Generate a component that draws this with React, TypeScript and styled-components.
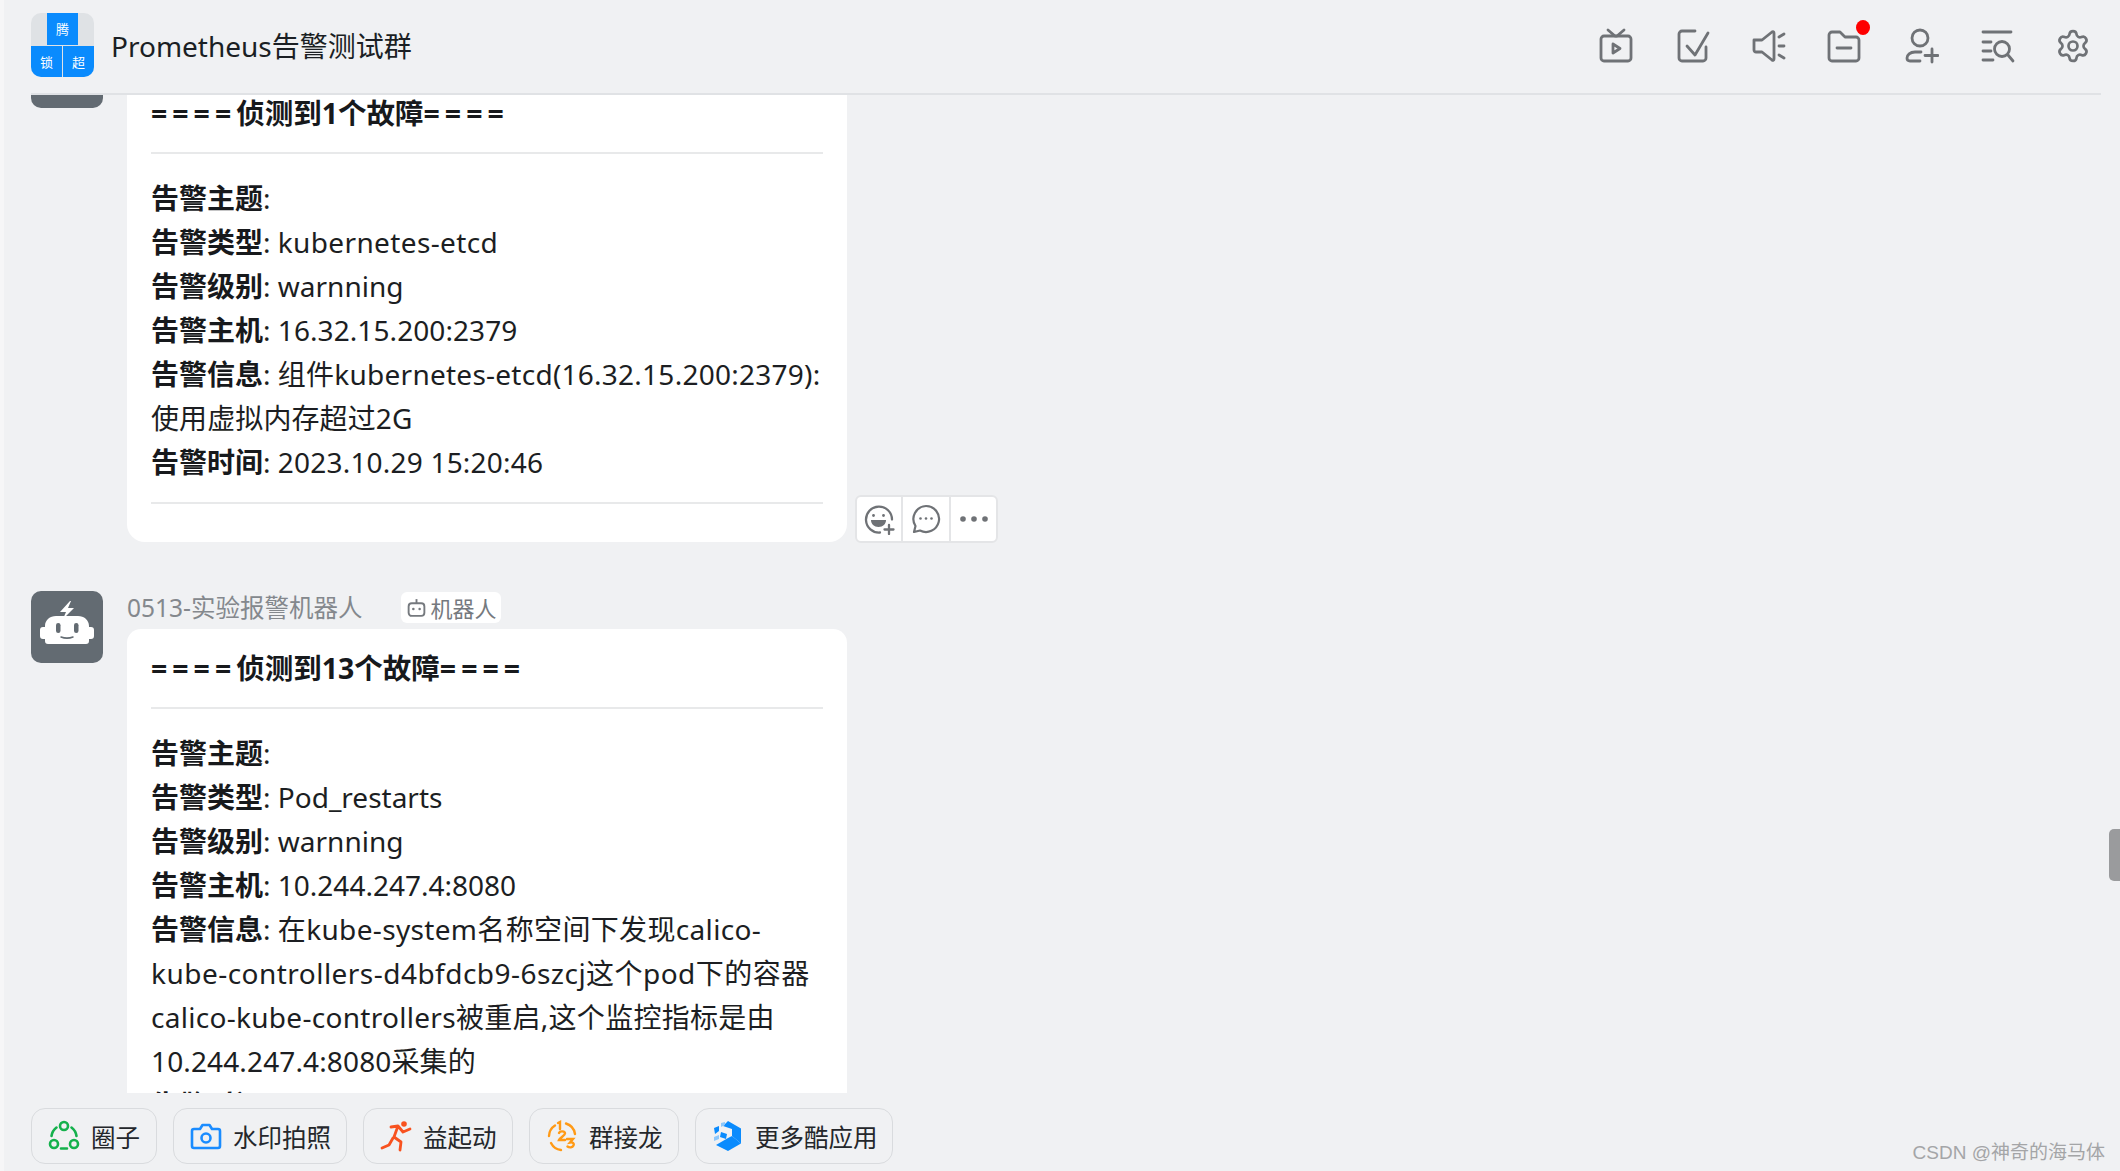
import React from "react";
import styled, { createGlobalStyle } from "styled-components";
import { Settings } from "lucide-react";

const FONT = `"Noto Sans", "Noto Sans CJK SC", sans-serif`;

const Global = createGlobalStyle`
  html, body { margin: 0; padding: 0; height: 100%; overflow: hidden; background: #f0f1f3; }
  #root { height: 100%; }
  * { box-sizing: border-box; }
`;

const Page = styled.div`
  position: relative;
  width: 2120px;
  height: 1171px;
  display: flex;
  flex-direction: column;
  border-left: 4px solid #f6f6f7;
  background: #f0f1f3;
  font-family: ${FONT};
  color: #1f2329;
  overflow: hidden;
`;
const EdgeMark = styled.div`
  position: absolute;
  left: -4px;
  top: 152px;
  width: 2px;
  height: 111px;
  background: #a8a8a8;
`;
const Header = styled.header`
  flex: none;
  height: 95px;
  margin-left: 27px;
  margin-right: 19px;
  border-bottom: 2px solid #e0e2e5;
  display: flex;
  align-items: center;
  position: relative;
  z-index: 2;
  background: #f0f1f3;
`;
const GroupLogo = styled.div`
  width: 63px;
  height: 64px;
  margin-top: -3px;
  border-radius: 10px;
  overflow: hidden;
  background: #dfe2e5;
  display: grid;
  grid-template-columns: 1fr 1fr;
  grid-template-rows: 1fr 1fr;
  gap: 1px;
  position: relative;
  flex: none;
`;
const LogoCell = styled.span<{ $top?: boolean }>`
  background: #0a8bfd;
  color: #fff;
  font-size: 13px;
  display: flex;
  align-items: center;
  justify-content: center;
  ${(p) => p.$top && `grid-column: 1 / 3; width: 31px; justify-self: center;`}
`;
const GroupName = styled.h1`
  margin: -3px 0 0 17px;
  font-size: 28px;
  font-weight: 400;
  color: #1b1f24;
  white-space: nowrap;
`;
const Tools = styled.div`
  margin-left: auto;
  display: flex;
  align-items: center;
  gap: 40px;
  margin-right: 10px;
  margin-top: -2px;
`;
const Tool = styled.span`
  position: relative;
  width: 36px;
  height: 36px;
  color: #6f7276;
  display: block;
  svg { display: block; width: 36px; height: 36px; }
`;
const RedDot = styled.i`
  position: absolute;
  right: -7px;
  top: -8px;
  width: 14px;
  height: 15px;
  border-radius: 50%;
  background: #fe0000;
`;
const Feed = styled.main`
  flex: 1;
  min-height: 0;
  overflow: hidden;
  padding: 0 0 0 27px;
`;
const Message = styled.article<{ $offset?: number }>`
  display: grid;
  grid-template-columns: 72px 720px auto;
  column-gap: 24px;
  align-items: end;
  ${(p) => (p.$offset ? `margin-top: ${p.$offset}px;` : "")}
`;
const Avatar = styled.div<{ $lift?: number }>`
  width: 72px;
  height: 72px;
  margin-top: ${(p) => -(p.$lift ?? 0)}px;
  border-radius: 10px;
  background: #636b72;
  align-self: start;
  grid-row: 1 / 3;
  display: flex;
  align-items: center;
  justify-content: center;
`;
const MetaRow = styled.div`
  grid-column: 2 / 4;
  height: 38px;
  display: flex;
  align-items: flex-start;
  font-size: 24.5px;
  line-height: 34px;
  color: #84888d;
  white-space: nowrap;
`;
const BotTag = styled.span`
  margin-left: 39px;
  margin-top: 1px;
  height: 31px;
  padding: 0 5px;
  border-radius: 6px;
  background: #fff;
  display: flex;
  align-items: center;
  gap: 3px;
  font-size: 22px;
  color: #75797e;
  svg { width: 21px; height: 21px; }
`;
const Bubble = styled.div<{ $clipped?: boolean }>`
  grid-column: 2;
  width: 720px;
  background: #fff;
  border-radius: ${(p) => (p.$clipped ? "14px 14px 0 0" : "0 0 18px 18px")};
  padding: ${(p) => (p.$clipped ? "14px 24px 0" : "0 24px 0")};
  font-size: 28px;
  line-height: 44px;
  color: #1c1e22;
`;
const Title = styled.div`
  font-weight: 700;
  font-size: 28.5px;
  line-height: 50px;
  color: #17191c;
`;
const Eq = styled.span`
  letter-spacing: 5px;
`;
const Rule = styled.hr<{ $after?: boolean; $tight?: boolean }>`
  border: 0;
  height: 2px;
  background: #e8e9ea;
  margin: ${(p) => (p.$after ? "18px 0 38px" : p.$tight ? "14px 0 22px" : "14px 0 23px")};
`;
const Row = styled.p`
  margin: 0;
  white-space: nowrap;
  b { font-weight: 700; color: #17191c; }
`;
const Value = styled.span<{ $track?: number }>`
  letter-spacing: ${(p) => p.$track ?? 0}px;
`;
const Actions = styled.div`
  grid-column: 3;
  margin-left: -16px;
  margin-bottom: -1px;
  display: flex;
  height: 48px;
  border: 2px solid #e4e5e7;
  border-radius: 6px;
  background: #fff;
  width: 143px;
  justify-self: start;
`;
const Action = styled.span<{ $w: number }>`
  width: ${(p) => p.$w}px;
  display: flex;
  align-items: center;
  justify-content: center;
  color: #6f7276;
  & + & { border-left: 2px solid #e4e5e7; }
  svg { width: 32px; height: 32px; display: block; }
`;
const Spacer = styled.div`
  height: 50px;
`;
const Footer = styled.footer`
  flex: none;
  height: 78px;
  padding: 15px 0 0 27px;
  display: flex;
  align-items: flex-start;
  gap: 16px;
`;
const AppBtn = styled.div<{ $w: number }>`
  width: ${(p) => p.$w}px;
  height: 56px;
  border: 1.5px solid #d9dbde;
  border-radius: 14px;
  padding-left: 16px;
  display: flex;
  align-items: center;
  gap: 11px;
  font-size: 24.5px;
  color: #24272b;
  white-space: nowrap;
  svg { width: 32px; height: 32px; flex: none; display: block; }
`;
const Watermark = styled.div`
  position: absolute;
  right: 15px;
  bottom: 5px;
  font-family: "Liberation Sans", "Noto Sans CJK SC", sans-serif;
  font-size: 19px;
  line-height: 26px;
  color: #a4a5a7;
  white-space: nowrap;
`;
const ScrollThumb = styled.div`
  position: absolute;
  right: 0;
  top: 829px;
  width: 11px;
  height: 52px;
  border-radius: 5px 0 0 5px;
  background: #9a9b9d;
`;

const S = { fill: "none", stroke: "currentColor", strokeWidth: 2.8, strokeLinecap: "round" as const, strokeLinejoin: "round" as const };

const TvIcon = () => (
  <svg viewBox="0 0 36 36" {...S}>
    <rect x="2" y="8" width="30" height="25" rx="3" />
    <path d="M9 2l7 6M25 2l-7 6" />
    <path d="M14 16l7 4.5-7 4.5z" />
  </svg>
);
const CheckIcon = () => (
  <svg viewBox="0 0 36 36" {...S}>
    <path d="M20 3H7a3 3 0 0 0-3 3v24a3 3 0 0 0 3 3h21a3 3 0 0 0 3-3V19" />
    <path d="M12 18l8 9L33 5" />
  </svg>
);
const SpeakerIcon = () => (
  <svg viewBox="0 0 36 36" {...S}>
    <path d="M3 12h8L21 4c1-.7 2-.2 2 1v26c0 1.200-1 1.700-2 1l-10-8H5a2 2 0 0 1-2-2z" />
    <path d="M28 9l5-3M28 18h5M28 27l5 3" />
  </svg>
);
const FolderIcon = () => (
  <svg viewBox="0 0 36 36" {...S}>
    <path d="M2 7a3 3 0 0 1 3-3h8l5 5h11a3 3 0 0 1 3 3v18a3 3 0 0 1-3 3H5a3 3 0 0 1-3-3z" />
    <path d="M10 20h14" />
  </svg>
);
const AddUserIcon = () => (
  <svg viewBox="0 0 36 36" {...S}>
    <circle cx="17" cy="10" r="8" />
    <path d="M18 24h-6c-5 0-8 3-8 6 0 2 1 3 3 3h10" />
    <path d="M29 21v13M22 27.500h13" />
  </svg>
);
const SearchListIcon = () => (
  <svg viewBox="0 0 36 36" {...S}>
    <path d="M4 4h28M4 14h8M4 23h8M4 32h10" />
    <circle cx="23" cy="21" r="7.500" />
    <path d="M29 27l5 6" />
  </svg>
);
const RobotFace = () => (
  <svg viewBox="0 0 72 72" width="72" height="72">
    <path d="M39 10L29 21h6l-3 7 11-11h-6l3-7z" fill="#fff" />
    <path d="M25 25h22c6 0 11 4 11 10v1h2a3 3 0 0 1 3 3v6a3 3 0 0 1-3 3h-2v2a3 3 0 0 1-3 3H17a3 3 0 0 1-3-3v-2h-2a3 3 0 0 1-3-3v-6a3 3 0 0 1 3-3h2v-1c0-6 5-10 11-10z" fill="#fff" />
    <rect x="25" y="32" width="4.500" height="10" rx="2.200" fill="#636b72" />
    <rect x="43" y="32" width="4.500" height="10" rx="2.200" fill="#636b72" />
    <path d="M30 46c4 1.500 8 1.500 12 0" stroke="#636b72" strokeWidth="1.500" fill="none" strokeLinecap="round" />
  </svg>
);
const BotGlyph = () => (
  <svg viewBox="0 0 20 20" fill="none" stroke="#75797e" strokeWidth="1.800">
    <rect x="2.500" y="6" width="15" height="12" rx="3" />
    <path d="M10 6V2" />
    <circle cx="7" cy="11.500" r="1.200" fill="#75797e" stroke="none" />
    <circle cx="13" cy="11.500" r="1.200" fill="#75797e" stroke="none" />
  </svg>
);
const EmojiAddIcon = () => (
  <svg viewBox="0 0 32 32" fill="none" stroke="currentColor" strokeWidth="2.300" strokeLinecap="round">
    <path d="M17 29.500A13 13 0 1 1 29 16.500" />
    <circle cx="10.500" cy="12.500" r="1.400" fill="currentColor" stroke="none" />
    <circle cx="20.500" cy="12.500" r="1.400" fill="currentColor" stroke="none" />
    <path d="M8 17h15c0 4-3 7-7.500 7S8 21 8 17z" fill="currentColor" stroke="none" />
    <path d="M26 22v9M21.500 26.500h9" />
  </svg>
);
const CommentIcon = () => (
  <svg viewBox="0 0 32 32" fill="none" stroke="currentColor" strokeWidth="2.200" strokeLinejoin="round">
    <path d="M16 3a13 13 0 1 1-6 24.500L4 29l1.500-6A13 13 0 0 1 16 3z" />
    <circle cx="10.500" cy="15.500" r="1.300" fill="currentColor" stroke="none" />
    <circle cx="16" cy="15.500" r="1.300" fill="currentColor" stroke="none" />
    <circle cx="21.500" cy="15.500" r="1.300" fill="currentColor" stroke="none" />
  </svg>
);
const MoreIcon = () => (
  <svg viewBox="0 0 32 32" fill="currentColor">
    <circle cx="5" cy="16" r="2.800" />
    <circle cx="16" cy="16" r="2.800" />
    <circle cx="27" cy="16" r="2.800" />
  </svg>
);
const CircleAppIcon = () => (
  <svg viewBox="0 0 32 32" fill="none" stroke="#14b14c" strokeWidth="2.600" strokeLinecap="round">
    <circle cx="16" cy="6" r="4" />
    <circle cx="6" cy="24" r="4" />
    <circle cx="26" cy="24" r="4" />
    <path d="M8.500 7.500A13 13 0 0 0 3.500 16M23.500 7.500A13 13 0 0 1 28.500 16M13 28.500h6" />
  </svg>
);
const CameraIcon = () => (
  <svg viewBox="0 0 32 32" fill="none" stroke="#1a8cff" strokeWidth="2.600" strokeLinejoin="round">
    <path d="M4 9h6l2.500-4h7L22 9h6a2 2 0 0 1 2 2v15a2 2 0 0 1-2 2H4a2 2 0 0 1-2-2V11a2 2 0 0 1 2-2z" />
    <circle cx="16" cy="18" r="4.500" />
  </svg>
);
const RunnerIcon = () => (
  <svg viewBox="0 0 32 32" fill="none" stroke="#f8521f" strokeWidth="2.800" strokeLinecap="round" strokeLinejoin="round">
    <circle cx="24" cy="4" r="2.800" fill="#f8521f" stroke="none" />
    <path d="M11 7l7-1 5 6 7-3M18 6l-4 11 7 5-1 8M13 18l-4 7-7 3" />
  </svg>
);
const ChainIcon = () => (
  <svg viewBox="0 0 32 32" fill="none" stroke="#ff9a16" strokeWidth="2.400" strokeLinecap="round">
    <path d="M20 3.500A13 13 0 0 1 29 14M3 16A13 13 0 0 1 9 5.500M5 23a13 13 0 0 0 10 7" />
    <path d="M12 3l2-1v7M13 13c1-2.500 6-2 6 .5 0 2-5 4-6 6.500h6M21 19h6l-3 3.500c3-.5 4.500 1 3.500 3s-4 2.500-6 1" />
  </svg>
);
const CubeIcon = () => (
  <svg viewBox="0 0 32 32">
    <path d="M16 1l13 7.500v15L20 16V9l-9-3z" fill="#0a8bfd" />
    <path d="M16 18L4 25l12 6 13-7.500L20 16z" fill="#0a8bfd" />
    <path d="M2 8l5-2 0 5-4 3zM9 12l6 2-1 5-6-2z" fill="#0a8bfd" />
    <path d="M9 3l4-1v3l-4 2zM2 17l5-2v4l-5 2z" fill="#8cc7fb" />
  </svg>
);

const Field = ({ k, track, children }: { k: string; track?: number; children?: React.ReactNode }) => (
  <Row>
    <b>{k}</b>: <Value $track={track}>{children}</Value>
  </Row>
);

export default function App() {
  return (
    <Page>
      <Global />
      <EdgeMark />
      <Header>
        <GroupLogo>
          <LogoCell $top>腾</LogoCell>
          <LogoCell>锁</LogoCell>
          <LogoCell>超</LogoCell>
        </GroupLogo>
        <GroupName>Prometheus告警测试群</GroupName>
        <Tools>
          <Tool><TvIcon /></Tool>
          <Tool><CheckIcon /></Tool>
          <Tool><SpeakerIcon /></Tool>
          <Tool><FolderIcon /><RedDot /></Tool>
          <Tool><AddUserIcon /></Tool>
          <Tool><SearchListIcon /></Tool>
          <Tool><Settings strokeWidth={1.8} /></Tool>
        </Tools>
      </Header>
      <Feed>
        <Message $offset={-57}>
          <Avatar $lift={2} />
          <Bubble>
            <Spacer />
            <Title><Eq>====</Eq>侦测到1个故障<Eq>====</Eq></Title>
            <Rule $tight />
            <Row><b>告警主题</b>:</Row>
            <Field k="告警类型" track={0.36}>kubernetes-etcd</Field>
            <Field k="告警级别">warnning</Field>
            <Field k="告警主机" track={0.08}>16.32.15.200:2379</Field>
            <Field k="告警信息" track={0.25}>组件kubernetes-etcd(16.32.15.200:2379):</Field>
            <Row><Value $track={0.1}>使用虚拟内存超过2G</Value></Row>
            <Field k="告警时间" track={0.2}>2023.10.29 15:20:46</Field>
            <Rule $after />
          </Bubble>
          <Actions>
            <Action $w={44}><EmojiAddIcon /></Action>
            <Action $w={48}><CommentIcon /></Action>
            <Action $w={47}><MoreIcon /></Action>
          </Actions>
        </Message>
        <Message $offset={49}>
          <Avatar><RobotFace /></Avatar>
          <MetaRow>
            0513-实验报警机器人
            <BotTag><BotGlyph />机器人</BotTag>
          </MetaRow>
          <Bubble $clipped>
            <Title><Eq>====</Eq>侦测到13个故障<Eq>====</Eq></Title>
            <Rule $tight />
            <Row><b>告警主题</b>:</Row>
            <Field k="告警类型">Pod_restarts</Field>
            <Field k="告警级别">warnning</Field>
            <Field k="告警主机">10.244.247.4:8080</Field>
            <Field k="告警信息" track={0.34}>在kube-system名称空间下发现calico-</Field>
            <Row><Value $track={0.47}>kube-controllers-d4bfdcb9-6szcj这个pod下的容器</Value></Row>
            <Row><Value $track={0.29}>calico-kube-controllers被重启,这个监控指标是由</Value></Row>
            <Row><Value $track={0.13}>10.244.247.4:8080采集的</Value></Row>
            <Field k="告警时间" track={0.2}>2023.10.29 15:20:46</Field>
          </Bubble>
        </Message>
      </Feed>
      <Footer>
        <AppBtn $w={126}><CircleAppIcon />圈子</AppBtn>
        <AppBtn $w={174}><CameraIcon />水印拍照</AppBtn>
        <AppBtn $w={150}><RunnerIcon />益起动</AppBtn>
        <AppBtn $w={150}><ChainIcon />群接龙</AppBtn>
        <AppBtn $w={198}><CubeIcon />更多酷应用</AppBtn>
      </Footer>
      <ScrollThumb />
      <Watermark>CSDN @神奇的海马体</Watermark>
    </Page>
  );
}
